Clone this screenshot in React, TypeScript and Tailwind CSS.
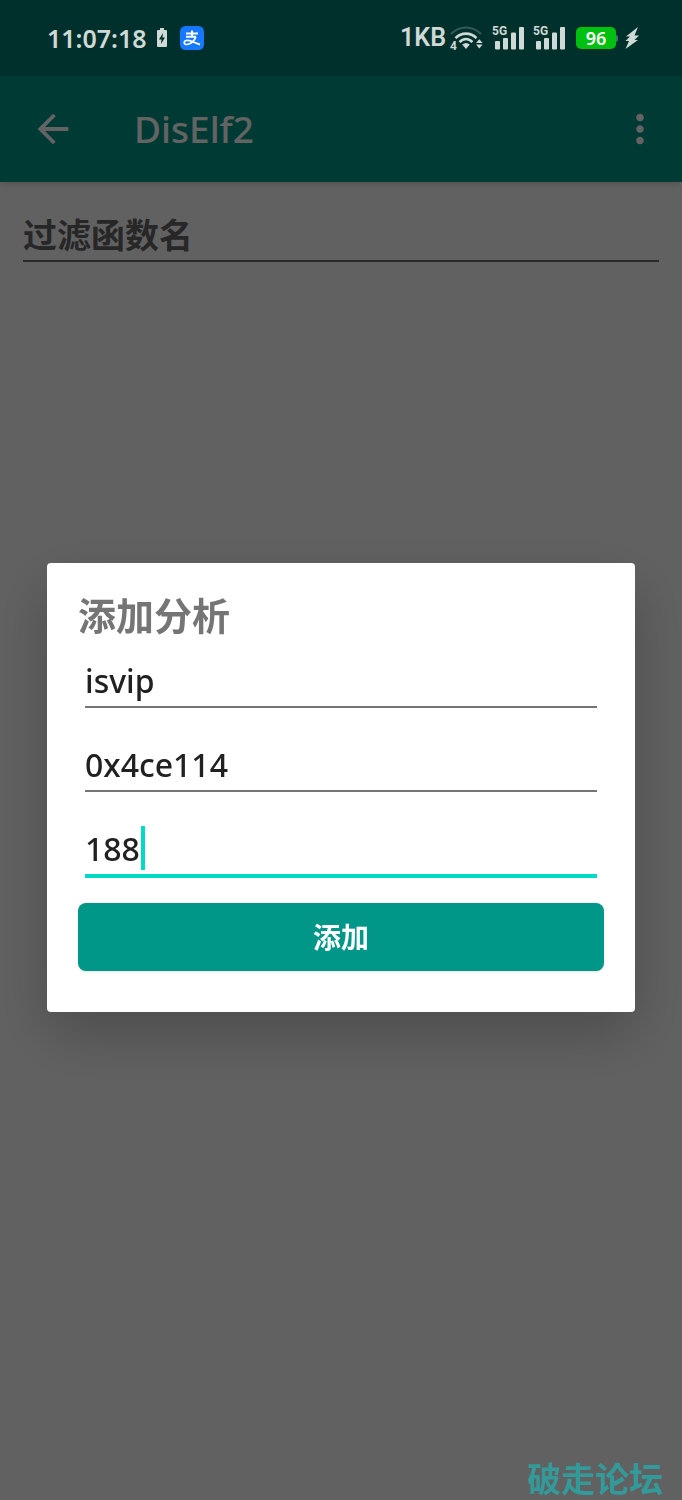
import { useState } from "react";
import { MdArrowBack, MdMoreVert } from "react-icons/md";

function Signal() {
  return (
    <div className="relative h-6 w-[33px]">
      <span className="absolute -top-px left-0 text-xs leading-3 font-bold">5G</span>
      <svg viewBox="0 0 33 24" className="h-6 w-[33px]" fill="currentColor" aria-hidden="true">
        <rect x="3" y="15" width="5" height="8.5" rx="1" />
        <rect x="11" y="12" width="5" height="11.5" rx="1" />
        <rect x="19" y="6.5" width="5" height="17" rx="1" />
        <rect x="27" y="1" width="5" height="22.5" rx="1" />
      </svg>
    </div>
  );
}

function Wifi() {
  return (
    <div className="relative h-[26px] w-[34px]">
      <svg viewBox="0 0 34 26" className="h-[26px] w-[34px]" fill="none" stroke="currentColor" aria-hidden="true">
        <path d="M1 9Q7.500 2.500 16 2.500T31 9" strokeWidth="2.2" opacity=".25" />
        <path d="M5.5 13.2Q10 8.600 16 8.600T26.500 13.200" strokeWidth="2.6" />
        <path d="M9.6 17.2Q12.300 14 16 14T22.400 17.200" strokeWidth="2.6" />
        <path d="M12.2 19.6Q16 16.200 19.800 19.600L16 24Z" fill="currentColor" stroke="none" />
        <path d="M26 18L29.3 14.200L32.600 18ZM26 19.600L29.300 23.400L32.600 19.600Z" fill="currentColor" stroke="none" />
      </svg>
      <span className="absolute -bottom-px left-0 text-xs leading-3 font-bold">4</span>
    </div>
  );
}

function StatusBar() {
  return (
    <div className="relative z-20 flex h-[76px] items-center justify-between bg-[#00302b] pr-[43px] pl-[47px] text-[#cfd9d6]">
      <div className="flex items-center">
        <span className="text-[25px] leading-8 font-semibold">11:07:18</span>
        <svg viewBox="0 0 10 20" className="ml-[10px] h-5 w-[10px]" fill="currentColor" aria-hidden="true">
          <path d="M3 0H7V2H9Q10 2 10 3V18Q10 19 9 19H1Q0 19 0 18V3Q0 2 1 2H3Z" />
          <path d="M6 5L2 11.5H4.5L4 16L8 9.500H5.500Z" fill="#00302b" />
        </svg>
        <svg viewBox="0 0 24 24" className="ml-[13px] size-6" fill="none" stroke="#fff" aria-hidden="true">
          <rect width="24" height="24" rx="5.5" fill="#1677ff" stroke="none" />
          <path d="M6 7.5H18M12 4.5V10.5M6 10.8H16" strokeWidth="2" />
          <path d="M16 10.8Q13.500 16 9.500 17.800C6.500 19.200 3.800 18.400 4.200 16.200C4.800 13.800 8.500 14 11.500 15.200L20 18.600" strokeWidth="1.7" />
        </svg>
      </div>
      <div className="flex items-center font-[Roboto]">
        <span className="mr-1 text-[25px] leading-8 font-semibold">1KB</span>
        <Wifi />
        <div className="ml-2 flex gap-2">
          <Signal />
          <Signal />
        </div>
        <div className="ml-[10px] flex h-[22px] w-10 items-center justify-center rounded-[5px] bg-[#00c010] font-['Noto_Sans'] text-lg leading-5 font-semibold text-white">
          96
        </div>
        <span className="h-[7px] w-[2px] rounded-r bg-[#4d6f6b]" />
        <svg viewBox="0 0 14 24" className="ml-[7px] h-6 w-[14px]" fill="currentColor" aria-hidden="true">
          <path d="M13 1L1 10.5H5L0.5 15H4L0.500 23L13 14H9.500L14 9.500H9.500Z" />
        </svg>
      </div>
    </div>
  );
}

const fieldClass =
  "block w-full bg-transparent pt-2 text-[32px] leading-[44px] font-medium text-[#212121] outline-none";

export default function App() {
  const [filter, setFilter] = useState("");
  const [form, setForm] = useState({
    name: "isvip",
    offset: "0x4ce114",
    size: "188",
  });

  return (
    <div className="relative min-h-screen bg-[#fafafa] font-['Noto_Sans','Noto_Sans_CJK_SC',sans-serif]">
      <StatusBar />

      <header className="relative flex h-[106px] items-center bg-[#009688] pr-[19px] pl-[30px] text-white shadow-md">
        <button type="button" aria-label="返回">
          <MdArrowBack className="size-[46px]" />
        </button>
        <h1 className="ml-[58px] flex-1 text-[37px] leading-[50px] font-medium">DisElf2</h1>
        <button type="button" aria-label="更多">
          <MdMoreVert className="size-[46px]" />
        </button>
      </header>

      <main className="px-[23px] pt-5">
        <input
          type="text"
          aria-label="过滤函数名"
          placeholder="过滤函数名"
          value={filter}
          onChange={(e) => setFilter(e.target.value)}
          className="block h-[60px] w-full border-b-2 border-[#6b6b6b] bg-transparent pt-2 text-[34px] leading-[44px] font-bold outline-none placeholder:text-[#666666]"
        />
      </main>

      {/* Dialog */}
      <div className="fixed inset-0 z-10 flex items-center justify-center bg-black/61 px-[47px] pt-[74px]">
        <form
          role="dialog"
          aria-labelledby="dialog-title"
          onSubmit={(e) => e.preventDefault()}
          className="w-full rounded bg-white px-[31px] pt-7 pb-[41px] shadow-[0_22px_56px_rgba(0,0,0,0.22)]"
        >
          <h2 id="dialog-title" className="text-[38px] leading-[48px] font-bold text-[#757575]">
            添加分析
          </h2>

          <div className="mx-[7px] mt-[9px] space-y-6">
            <input
              type="text"
              aria-label="函数名"
              value={form.name}
              onChange={(e) => setForm({ ...form, name: e.target.value })}
              className={`${fieldClass} h-[60px] border-b-2 border-[#757575]`}
            />
            <input
              type="text"
              aria-label="偏移"
              value={form.offset}
              onChange={(e) => setForm({ ...form, offset: e.target.value })}
              className={`${fieldClass} h-[60px] border-b-2 border-[#757575]`}
            />
            <div className="relative">
              <input
                type="text"
                aria-label="大小"
                value={form.size}
                onChange={(e) => setForm({ ...form, size: e.target.value })}
                className={`${fieldClass} h-[62px] border-b-4 border-[#03dac5]`}
              />
              <span className="absolute bottom-2 left-14 h-11 w-1 bg-[#03dac5]" />
            </div>
          </div>

          <button
            type="submit"
            className="mt-[25px] h-[68px] w-full rounded-lg bg-[#009688] text-[28px] leading-10 font-bold text-white shadow"
          >
            添加
          </button>
        </form>
      </div>

      {/* Watermark */}
      <p className="absolute right-[19px] bottom-0 z-20 font-['Noto_Sans_CJK_SC',sans-serif] text-[34px] leading-[44px] font-bold text-[#339999]">
        破走论坛
      </p>
    </div>
  );
}
